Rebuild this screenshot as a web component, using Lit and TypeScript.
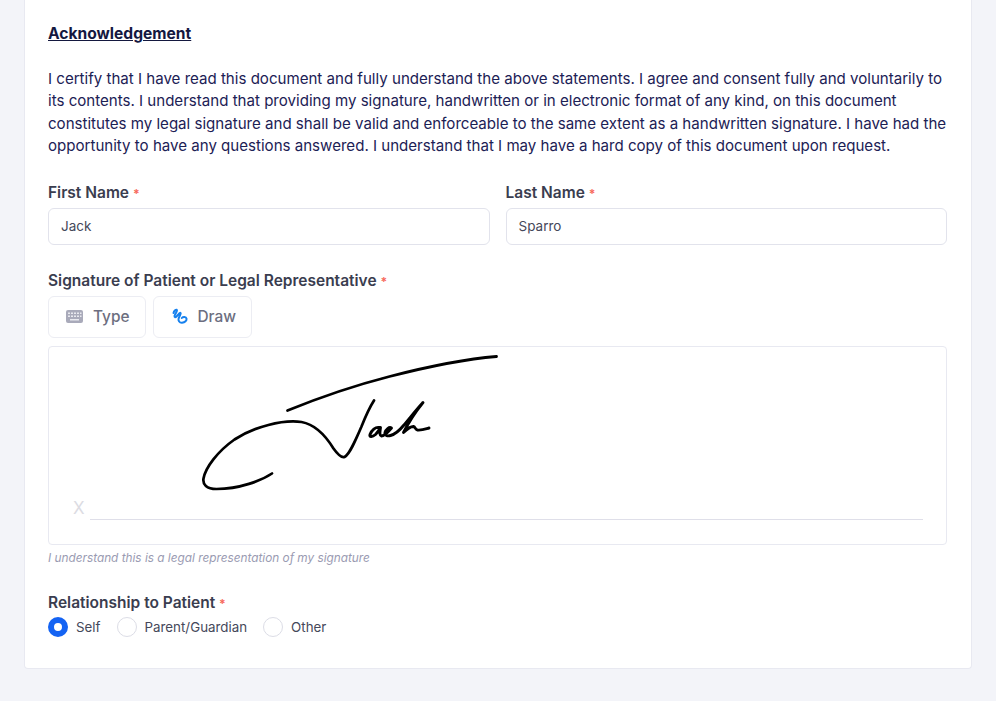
import { LitElement, html, css, svg } from "lit";
import { customElement } from "lit/decorators.js";

@customElement("app-root")
export class AppRoot extends LitElement {
  static styles = css`
    :host {
      display: block;
      height: 701px;
      overflow: hidden;
      background: #f3f4f9;
      font-family: Inter, "Liberation Sans", sans-serif;
      color: #181c4d;
    }
    .card {
      box-sizing: border-box;
      height: 669px;
      margin: 0 24px;
      padding: 23px 24px 0 23px;
      background: #fff;
      border: 1px solid #e8e9f1;
      border-top: none;
      border-radius: 0 0 4px 4px;
    }
    h2 {
      margin: 0 0 23px;
      font-size: 15.6px;
      line-height: 22px;
      font-weight: 700;
      text-decoration: underline;
      color: #14183f;
    }
    p {
      margin: 0 0 24.4px;
      font-size: 15.08px;
      line-height: 22.4px;
      color: #1c2155;
    }
    .names {
      display: grid;
      grid-template-columns: 1fr 1fr;
      gap: 16px;
      margin-bottom: 25px;
    }
    .label {
      font-size: 15.5px;
      line-height: 22px;
      font-weight: 600;
      color: #3a3d4f;
      margin-bottom: 3.4px;
    }
    .label.sig {
      margin-bottom: 2.4px;
    }
    .req {
      color: #f7685b;
      font-size: 12px;
      font-weight: 700;
    }
    .input {
      box-sizing: border-box;
      height: 37px;
      padding: 0 12px 2px;
      display: flex;
      align-items: center;
      font-size: 13.5px;
      color: #45485a;
      border: 1.5px solid #e2e3ec;
      border-radius: 6px;
      background: #fff;
    }
    .tabs {
      display: flex;
      gap: 7px;
      margin-bottom: 8px;
    }
    .tab {
      box-sizing: border-box;
      height: 42px;
      padding: 0 15px 0 17px;
      display: flex;
      align-items: center;
      gap: 10px;
      font-size: 15.4px;
      font-weight: 500;
      color: #6c6e80;
      border: 1.5px solid #ecedf3;
      border-radius: 6px;
    }
    .pad {
      position: relative;
      box-sizing: border-box;
      height: 199px;
      border: 1.5px solid #e8e9f1;
      border-radius: 4px;
    }
    .pad svg.ink {
      position: absolute;
      left: 0;
      top: 0;
    }
    .x {
      position: absolute;
      left: 24px;
      top: 151px;
      font-size: 17px;
      line-height: 20px;
      color: #dcdce3;
    }
    .line {
      position: absolute;
      left: 41px;
      right: 23px;
      top: 172px;
      border-top: 1.5px solid #dfdfe9;
    }
    .hint {
      margin: 5px 0 26px;
      font-size: 11.8px;
      line-height: 16px;
      font-style: italic;
      color: #9a9bb2;
    }
    .label.rel {
      margin-bottom: 2px;
    }
    .radios {
      display: flex;
      align-items: center;
      font-size: 13.35px;
      color: #45485a;
    }
    .radio {
      display: flex;
      align-items: center;
      gap: 8px;
      margin-right: 16px;
    }
    .dot {
      box-sizing: border-box;
      width: 20px;
      height: 20px;
      border-radius: 50%;
      border: 1.5px solid #dcdde6;
      background: #fff;
    }
    .dot.on {
      border: 6px solid #1463f3;
    }
  `;

  private ink() {
    const ox = 49.5;
    const oy = 347.5;
    return html`<svg class="ink" width="897" height="196" viewBox="${ox} ${oy} 897 196" fill="none" stroke="#000" stroke-linecap="round" stroke-linejoin="round">
      ${svg`<path stroke-width="2.8" d="M288 411C320 398 355 386 390 377C425 368 460 360 497 357"/>
      <path stroke-width="2.7" d="M272.500 474C262 481 240 489.500 217 489.500C207 489.500 203 485 204 479C206 468 218 452 235 440C255 427 283 420 302 422.500C316 425 326 436 334 449C339 456 342 458.500 345 457.500C350 455 356 441 362 427C366 417 370 408 374.500 401"/>
      <path stroke-width="2.900" d="M380 428C376 427 372 431 370.500 435C369.500 438 373 437.500 376 435C379 432 380 430 381 428C380.500 432 379.500 436 382 436.500C385 436.500 389 432 392 428.500C389.500 427 386.500 430 385.500 433C385 436 388 437 391 436C396 434.500 400 431 404 426C410 419 417 410 423.500 403C417 411 410 421 404 433C407 430 411 427 414 427C416 427.500 415.500 430 418 430.500C421.500 431 426 429.500 429.500 428.500"/>`}
    </svg>`;
  }

  render() {
    const req = html`<span class="req">*</span>`;
    return html`<div class="card">
      <h2>Acknowledgement</h2>
      <p>I certify that I have read this document and fully understand the above statements. I agree and consent fully and voluntarily to its contents. I understand that providing my signature, handwritten or in electronic format of any kind, on this document constitutes my legal signature and shall be valid and enforceable to the same extent as a handwritten signature. I have had the opportunity to have any questions answered. I understand that I may have a hard copy of this document upon request.</p>
      <div class="names">
        <div><div class="label">First Name ${req}</div><div class="input">Jack</div></div>
        <div><div class="label">Last Name ${req}</div><div class="input">Sparro</div></div>
      </div>
      <div class="label sig">Signature of Patient or Legal Representative ${req}</div>
      <div class="tabs">
        <div class="tab">
          <svg width="17" height="13" viewBox="0 0 17 13">
            <rect width="17" height="13" rx="2" fill="#a9aaba"/>
            <g fill="#e9e9ef">
              <rect x="2" y="2.500" width="2" height="1.500"/><rect x="5" y="2.500" width="2" height="1.500"/><rect x="8" y="2.500" width="2" height="1.500"/><rect x="11" y="2.500" width="2" height="1.500"/><rect x="14" y="2.500" width="1.500" height="1.500"/>
              <rect x="2" y="5.500" width="2" height="1.500"/><rect x="5" y="5.500" width="2" height="1.500"/><rect x="8" y="5.500" width="2" height="1.500"/><rect x="11" y="5.500" width="2" height="1.500"/><rect x="14" y="5.500" width="1.500" height="1.500"/>
              <rect x="4" y="9" width="9" height="1.500"/>
            </g>
          </svg>
          Type
        </div>
        <div class="tab">
          <svg width="17" height="17" viewBox="0 0 17 17" fill="none" stroke="#1681ee" stroke-width="2" stroke-linecap="round" stroke-linejoin="round">
            <path d="M2.500 5C3 3 4.500 1.500 5.800 1.800C7 2.500 4 6 3.500 8C3.300 9.500 4.500 9.500 5.500 8.500L8.500 5.200C9.500 4.500 10 5 9.500 6L7.600 10.500C7 12.500 8.500 15 11 14.800C14 14.500 16 12.500 15.500 10.500C15 8.500 12 8.500 10.800 10"/>
          </svg>
          Draw
        </div>
      </div>
      <div class="pad">
        ${this.ink()}
        <span class="x">X</span>
        <div class="line"></div>
      </div>
      <div class="hint">I understand this is a legal representation of my signature</div>
      <div class="label rel">Relationship to Patient ${req}</div>
      <div class="radios">
        <label class="radio"><span class="dot on"></span>Self</label>
        <label class="radio"><span class="dot"></span>Parent/Guardian</label>
        <label class="radio"><span class="dot"></span>Other</label>
      </div>
    </div>`;
  }
}
